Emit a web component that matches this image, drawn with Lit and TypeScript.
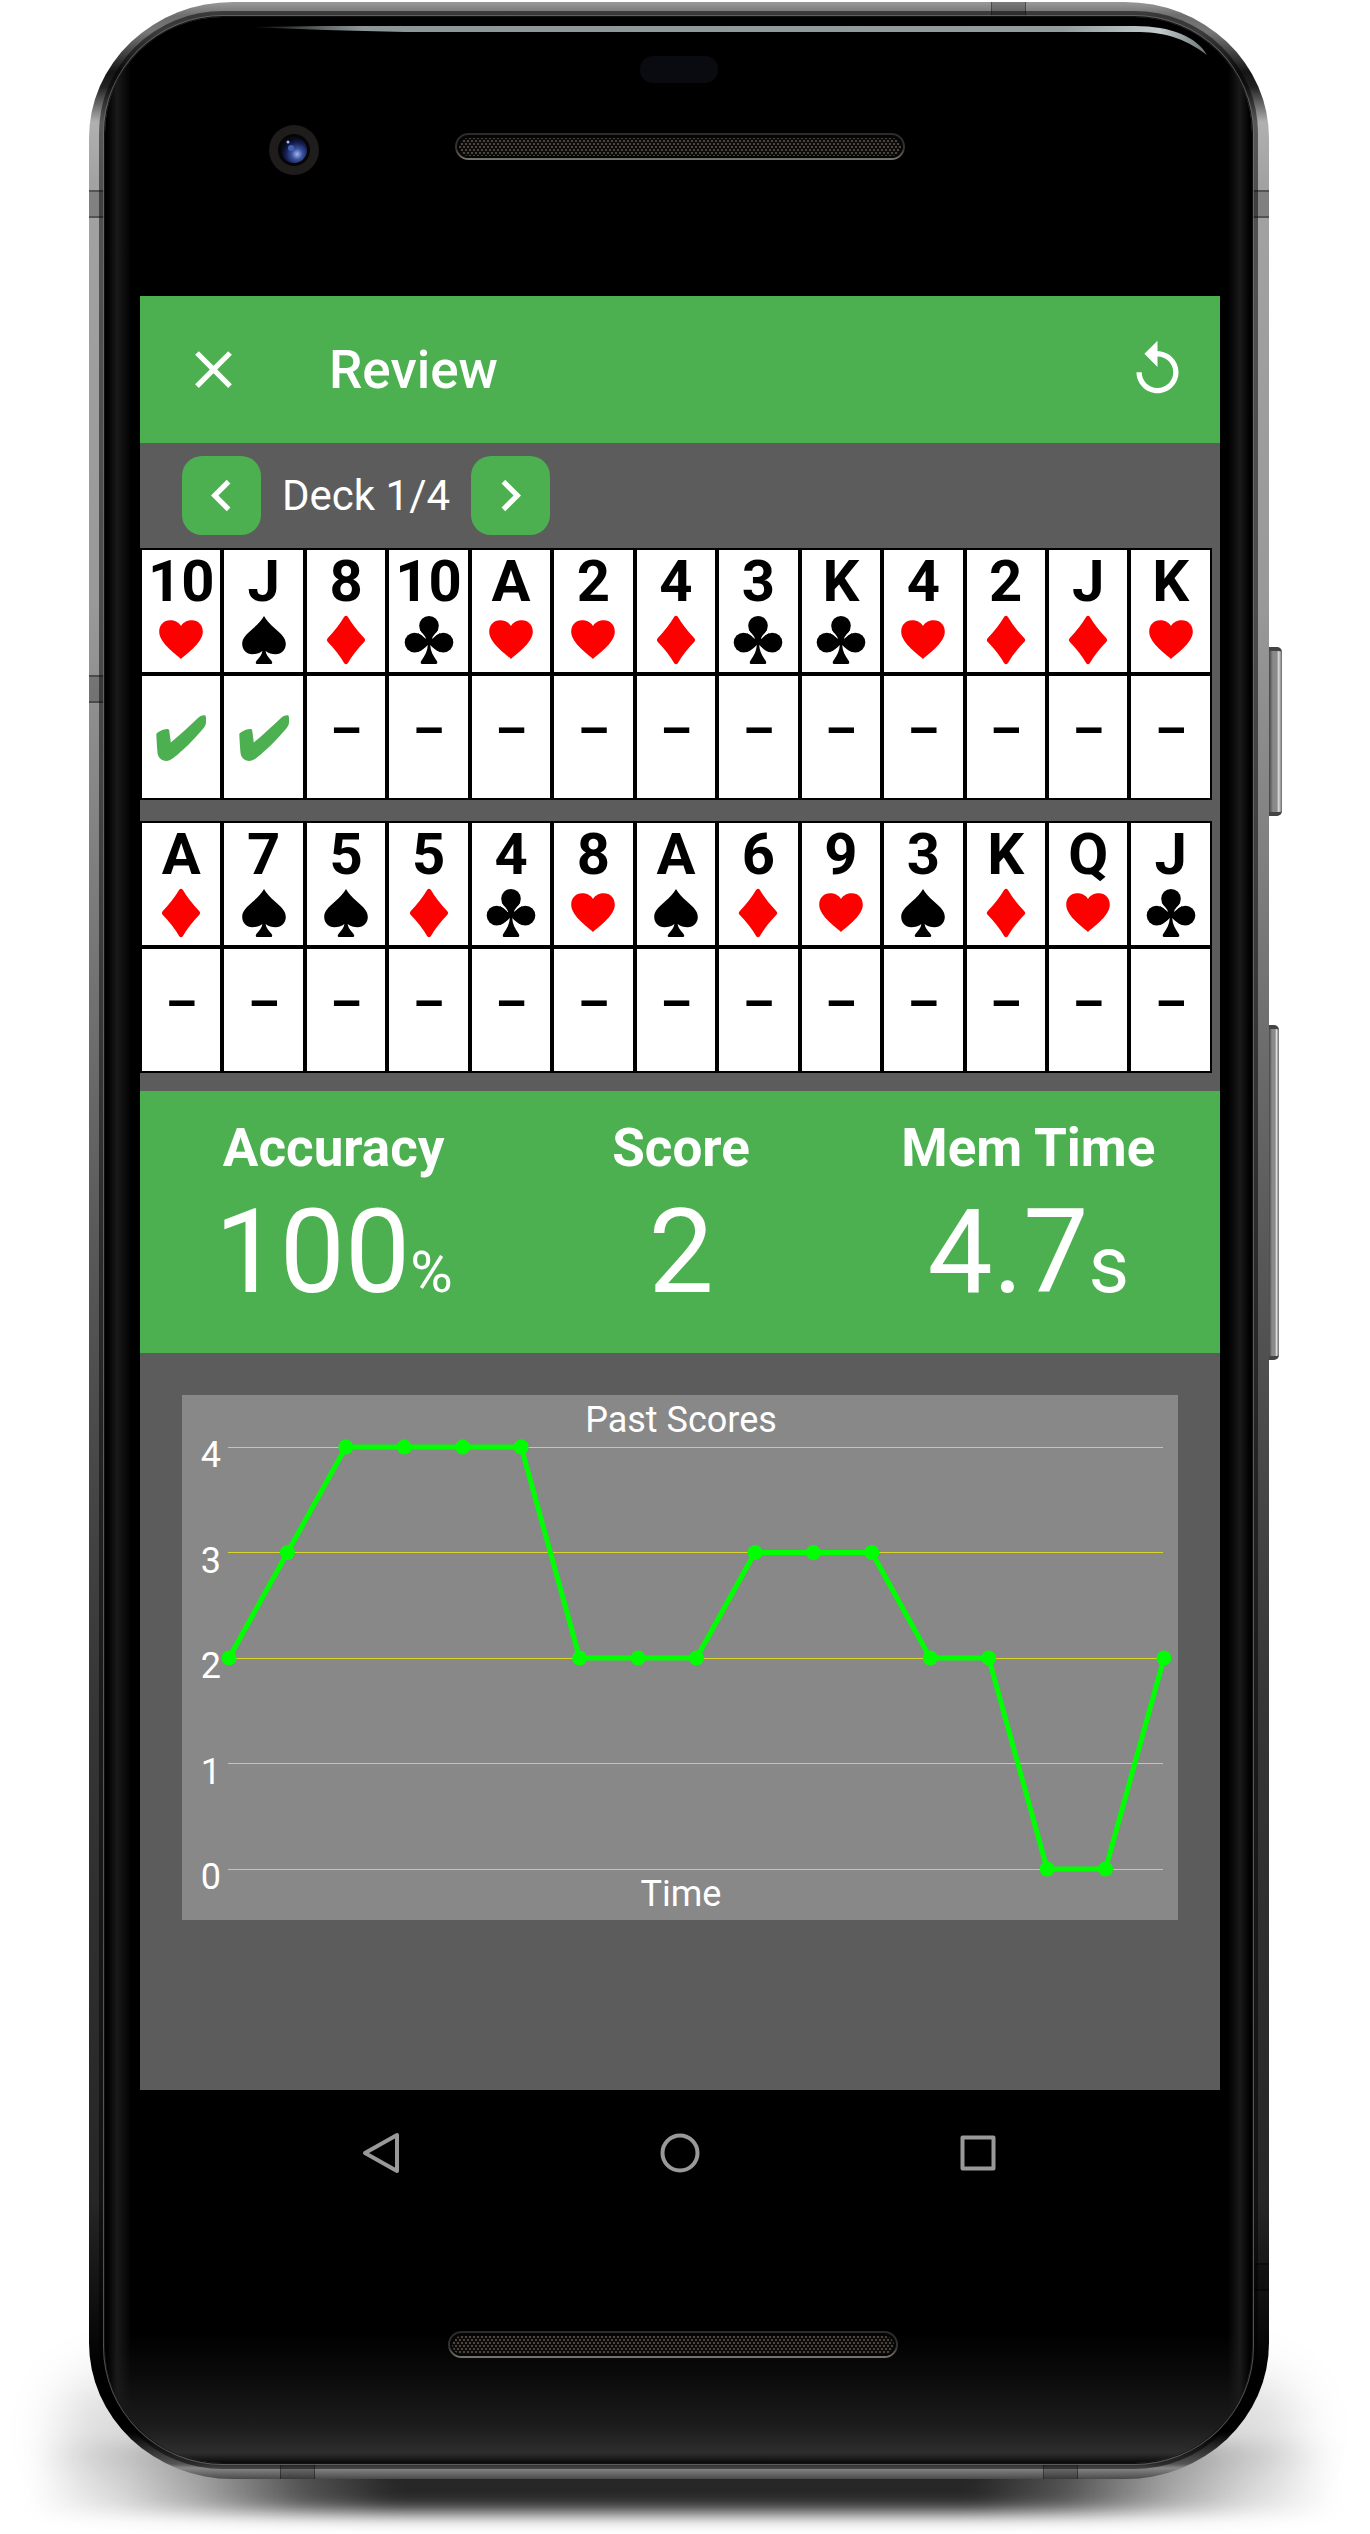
import { LitElement, html, css, svg } from "lit";
import { customElement, property, state } from "lit/decorators.js";
import { classMap } from "lit/directives/class-map.js";

type Suit = "hearts" | "spades" | "diamonds" | "clubs";
interface Card {
  rank: string;
  suit: Suit;
  correct?: boolean;
}

const SUITS: Record<string, Suit> = { H: "hearts", S: "spades", D: "diamonds", C: "clubs" };

const parseCards = (text: string): Card[] =>
  text.split(" ").map((c) => ({
    rank: c.replace(/[HSDC]\+?$/, ""),
    suit: SUITS[c.replace("+", "").slice(-1)],
    correct: c.endsWith("+"),
  }));

const CARD_ROWS: Card[][] = [
  parseCards("10H+ JS+ 8D 10C AH 2H 4D 3C KC 4H 2D JD KH"),
  parseCards("AD 7S 5S 5D 4C 8H AS 6D 9H 3S KD QH JC"),
];

const SUIT_SHAPES: Record<Suit, unknown> = {
  hearts: svg`<path d="M25 47C22 43.5 3.2 31.5 3.2 19.7C3.2 13 8 8.3 14 8.3C18.5 8.3 22.5 10 25 14C27.5 10 31.5 8.3 36 8.3C42 8.3 46.8 13 46.8 19.7C46.8 31.5 28 43.5 25 47Z"/>`,
  spades: svg`<path d="M25 4C23 8 18.5 12.5 14 16.5C7 22.5 3.2 26.5 3.2 32C3.2 37.8 7.5 42.2 13.3 42.2C17.2 42.2 20.6 41.2 23.4 39C22.8 43 20.5 45.5 18.2 48C16 50.5 16.5 52 18.5 52H31.5C33.5 52 34 50.5 31.8 48C29.5 45.5 27.2 43 26.6 39C29.4 41.2 32.8 42.2 36.7 42.2C42.5 42.2 46.8 37.8 46.8 32C46.8 26.5 43 22.5 36 16.5C31.5 12.5 27 8 25 4Z"/>`,
  diamonds: svg`<path d="M23.2 4.8Q25 2.8 26.8 4.8Q33 15.5 43.4 26.2Q45 28 43.4 29.8Q33 40.5 26.8 51.2Q25 53.2 23.2 51.2Q17 40.5 6.6 29.8Q5 28 6.6 26.2Q17 15.5 23.2 4.8Z"/>`,
  clubs: svg`<circle cx="25" cy="13.8" r="9.8"/><circle cx="10.6" cy="30.6" r="9.9"/><circle cx="39.4" cy="30.6" r="9.9"/>
    <path d="M16 17.5C17.5 21 21.5 23.5 22 27C20 25.5 18 23 14 21.3V39.9C18.5 38.7 20.5 36 23.8 33C23.5 39 21 43.5 17.5 48.5C16 51 16.8 52 18.5 52H31.5C33.2 52 34 51 32.5 48.5C29 43.5 26.5 39 26.2 33C29.5 36 31.5 38.7 36 39.9V21.3C32 23 30 25.5 28 27C28.5 23.5 32.5 21 34 17.5Z"/>`,
};

@customElement("card-table")
export class CardTable extends LitElement {
  @property({ attribute: false }) cards: Card[] = [];

  static styles = css`
    :host {
      display: block;
    }
    .cards {
      width: 100%;
      table-layout: fixed;
      border-collapse: separate;
      border-spacing: 0;
      background: #fff;
      color: #000;
      text-align: center;
      font-size: 58px;
      line-height: 62px;
      font-weight: 700;
    }
    .cell {
      box-sizing: border-box;
      height: 126px;
      padding: 0;
      border: 2px solid #000;
      vertical-align: top;
      font-weight: 700;
    }
    .rank {
      display: block;
      margin: 0 -4px;
    }
    .suit {
      display: block;
      width: 50px;
      height: 56px;
      margin: 0 auto;
      fill: #000;
    }
    .red {
      fill: #f00;
    }
    .answer {
      padding-top: 24px;
      font-size: 50px;
    }
    .check {
      display: block;
      width: 50px;
      height: 46px;
      margin: 15px auto 0;
      fill: #4caf50;
    }
  `;

  render() {
    return html`<table class="cards">
      <tr>
        ${this.cards.map(
          (c) => html`<th class="cell" scope="col">
            <span class="rank">${c.rank}</span>
            <svg
              class=${classMap({ suit: true, red: c.suit === "hearts" || c.suit === "diamonds" })}
              viewBox="0 0 50 56"
              role="img"
              aria-label=${c.suit}
            >
              ${SUIT_SHAPES[c.suit]}
            </svg>
          </th>`
        )}
      </tr>
      <tr>
        ${this.cards.map(
          (c) => html`<td class="cell answer">
            ${c.correct
              ? html`<svg class="check" viewBox="0 0 50 46" role="img" aria-label="correct">
                  <path
                    d="M.3 19C2 16.5 7 14.4 11 14C12.6 14 13.1 14.5 13.3 16L14.8 27.5C24 20 34 10.5 42.5 2.5C45 .4 48 -.2 49.3.5C50 1 50.1 3 50 7C50 10 49 11.5 46 15C38 24.5 27 35.5 18 42.5C13.5 46 10.5 46.5 7.5 45.5C4.5 44.5 2.3 42.5 1.5 38C1 32 .5 25 .3 19Z"
                  />
                </svg>`
              : "–"}
          </td>`
        )}
      </tr>
    </table>`;
  }
}

@customElement("score-chart")
export class ScoreChart extends LitElement {
  @property({ attribute: false }) scores: number[] = [];

  static styles = css`
    :host {
      display: block;
    }
    .chart {
      display: block;
      width: 100%;
      height: auto;
      background: #888;
    }
    .grid {
      stroke: #d8d62a;
      stroke-width: 1;
      shape-rendering: crispEdges;
    }
    .line {
      fill: none;
      stroke: #0f0;
      stroke-width: 5;
      stroke-linejoin: round;
    }
    .dot {
      fill: #0f0;
    }
    .label {
      fill: #fff;
      font-size: 36px;
    }
    .tick {
      text-anchor: end;
    }
    .title {
      text-anchor: middle;
    }
  `;

  private x(i: number) {
    return 47 + (i * 935) / (this.scores.length - 1);
  }

  private y(v: number) {
    return 474 - v * 105.5;
  }

  render() {
    const points = this.scores.map((s, i) => `${this.x(i)},${this.y(s)}`).join(" ");
    return html`<svg class="chart" viewBox="0 0 996 525" role="img" aria-label="Past Scores">
      ${[4, 3, 2, 1, 0].map(
        (v) => svg`<line class="grid" x1="46" x2="981" y1=${this.y(v)} y2=${this.y(v)}/>
          <text class="label tick" x="39" y=${this.y(v) + 20}>${v}</text>`
      )}
      <text class="label title" x="499" y="37">Past Scores</text>
      <text class="label title" x="499" y="511">Time</text>
      <polyline class="line" points=${points} />
      ${this.scores.map((s, i) => svg`<circle class="dot" cx=${this.x(i)} cy=${this.y(s)} r="7.5"/>`)}
    </svg>`;
  }
}

@customElement("app-root")
export class AppRoot extends LitElement {
  @state() private deck = 1;
  private readonly decks = 4;
  private readonly scores = [2, 3, 4, 4, 4, 4, 2, 2, 2, 3, 3, 3, 2, 2, 0, 0, 2];

  static styles = css`
    :host {
      display: block;
      padding: 2px 101px 55px 89px;
      background: #fff;
      overflow: hidden;
      font-family: Roboto, "Liberation Sans", sans-serif;
    }
    .phone {
      position: relative;
      isolation: isolate;
      padding: 15px 17px 16px 16px;
    }
    .rim {
      position: absolute;
      inset: 0;
      z-index: -1;
      border-radius: 144px / 136px;
      background: linear-gradient(
        to bottom,
        #999 0,
        #6d6d6d 14px,
        #777 30px,
        #151515 70px,
        #222 85px,
        #b0b0b0 120px,
        #a2a2a2 180px,
        #999 600px,
        #7b7b7b 900px,
        #585858 1250px,
        #363636 1700px,
        #262626 2200px,
        #000 2370px,
        #000 2430px,
        #555 2462px,
        #888 2466px,
        #4a4a4a 100%
      );
    }
    .shadow {
      position: absolute;
      z-index: -2;
    }
    .shadow-wide {
      inset: auto -30px 0 -30px;
      height: 100px;
      border-radius: 60px;
      background: rgba(0, 0, 0, 0.14);
      filter: blur(26px);
    }
    .shadow-core {
      inset: auto -70px -34px -60px;
      height: 70px;
      background: linear-gradient(
        to right,
        transparent 0,
        rgba(0, 0, 0, 0.12) 7%,
        rgba(0, 0, 0, 0.32) 13%,
        rgba(0, 0, 0, 0.66) 21%,
        rgba(0, 0, 0, 0.84) 28%,
        rgba(0, 0, 0, 0.84) 72%,
        rgba(0, 0, 0, 0.66) 79%,
        rgba(0, 0, 0, 0.32) 87%,
        rgba(0, 0, 0, 0.12) 93%,
        transparent 100%
      );
      filter: blur(9px);
    }
    .band {
      position: absolute;
      z-index: -1;
      background: rgba(0, 0, 0, 0.2);
      border: 0 solid rgba(0, 0, 0, 0.35);
    }
    .band-side {
      height: 24px;
      width: 16px;
      border-width: 2px 0;
    }
    .band-flat {
      width: 33px;
      height: 15px;
      border-width: 0 1px;
    }
    .left {
      left: 0;
    }
    .right {
      right: 0;
    }
    .high {
      top: 188px;
    }
    .middle {
      top: 673px;
    }
    .low {
      top: 2261px;
    }
    .top {
      top: 0;
      right: 243px;
    }
    .bottom-left {
      bottom: 0;
      left: 191px;
    }
    .bottom-right {
      bottom: 0;
      right: 191px;
    }
    .key {
      position: absolute;
      left: 100%;
      z-index: -2;
      border-radius: 0 5px 5px 0;
      background: linear-gradient(to right, #444 0, #8a8a8a 30%, #8a8a8a 60%, #ddd 75%, #666 100%);
      border: 0 solid #444;
      border-width: 4px 0;
      box-sizing: border-box;
    }
    .power {
      top: 645px;
      width: 13px;
      height: 169px;
    }
    .volume {
      top: 1023px;
      width: 10px;
      height: 335px;
    }
    .glass {
      overflow: hidden;
      border-radius: 118px / 116px;
      background: linear-gradient(to right, #000 2px, #1a1a1a 12px, transparent 26px, transparent calc(100% - 24px), #1a1a1a calc(100% - 12px), #000 calc(100% - 2px)),
        linear-gradient(to top, #0a0a0a 0, #2e2e2e 10px, #1c1c1c 36px, #0a0a0a 90px, #000 130px);
      box-shadow: 0 0 0 1px #111, 0 0 0 2px #777a, 0 0 0 6px rgba(0, 0, 0, 0.5);
    }
    .bezel {
      display: block;
      width: 100%;
      height: auto;
    }
    .screen {
      margin: 0 32px 0 35px;
    }
    .app {
      background: #5c5c5c;
      color: #fff;
      padding-bottom: 170px;
    }
    button {
      display: flex;
      align-items: center;
      justify-content: center;
      margin: 0;
      padding: 0;
      border: 0;
      background: none;
      color: inherit;
      font: inherit;
      cursor: pointer;
    }
    .icon {
      display: block;
      width: 63px;
      height: 63px;
      fill: currentColor;
    }
    .app-bar {
      display: flex;
      align-items: center;
      gap: 84px;
      height: 147px;
      padding: 0 31px 0 42px;
      background: #4caf50;
    }
    .app-title {
      flex: 1;
      margin: 0;
      font-size: 53px;
      line-height: 64px;
      font-weight: 500;
    }
    .deck-bar {
      display: flex;
      align-items: center;
      gap: 21px;
      padding: 13px 42px;
      font-size: 42px;
      line-height: 48px;
    }
    .step {
      width: 79px;
      height: 79px;
      border-radius: 20px;
      background: #4caf50;
    }
    .decks {
      display: grid;
      gap: 21px;
      padding: 0 8px 18px 0;
    }
    .stats {
      display: grid;
      grid-template-columns: repeat(3, 1fr);
      margin: 0;
      padding: 27px 18px 33px 20px;
      background: #4caf50;
      text-align: center;
    }
    .stat {
      display: grid;
      gap: 6px;
    }
    .stat-name {
      font-size: 53px;
      line-height: 60px;
      font-weight: 700;
    }
    .stat-value {
      margin: 0;
      font-size: 116px;
      line-height: 136px;
      white-space: nowrap;
    }
    .percent {
      font-size: 58px;
      line-height: 1;
    }
    .seconds {
      font-size: 79px;
      line-height: 1;
    }
    .chart-area {
      padding: 42px 42px 0;
    }
    .nav {
      display: flex;
      justify-content: space-evenly;
      height: 126px;
    }
    .nav-button {
      width: 112px;
    }
    .nav-icon {
      display: block;
      width: 44px;
      height: 44px;
      fill: none;
      stroke: #999;
      stroke-width: 4;
      stroke-linejoin: round;
    }
  `;

  private step(by: number) {
    this.deck = Math.min(this.decks, Math.max(1, this.deck + by));
  }

  private speaker(x: number, y: number) {
    return svg`<defs>
        <pattern id="mesh" width="4" height="6" patternUnits="userSpaceOnUse">
          <rect width="4" height="6" fill="#0c0b0a"/>
          <rect width="2" height="2" fill="#4c463d"/>
          <rect x="2" y="3" width="2" height="2" fill="#4c463d"/>
        </pattern>
        <linearGradient id="lip" x2="0" y2="1">
          <stop offset="0" stop-color="#2b2b2b"/>
          <stop offset=".6" stop-color="#333"/>
          <stop offset="1" stop-color="#77736c"/>
        </linearGradient>
      </defs>
      <rect x=${x + 1} y=${y + 1} width="448" height="25" rx="12.5" fill="#050505" stroke="url(#lip)" stroke-width="2"/>
      <rect x=${x + 4} y=${y + 5} width="442" height="18" rx="9" fill="url(#mesh)"/>`;
  }

  render() {
    return html`
      <div class="phone">
        <div class="shadow shadow-wide"></div>
        <div class="shadow shadow-core"></div>
        <div class="key power"></div>
        <div class="key volume"></div>
        <div class="rim"></div>
        <div class="band band-side left high"></div>
        <div class="band band-side right high"></div>
        <div class="band band-side left middle"></div>
        <div class="band band-side right low"></div>
        <div class="band band-flat top"></div>
        <div class="band band-flat bottom-left"></div>
        <div class="band band-flat bottom-right"></div>

        <div class="glass">
          <svg class="bezel" viewBox="0 0 1147 279" aria-hidden="true">
            <defs>
              <linearGradient id="glare">
                <stop offset="0" stop-color="#9aa3a4" stop-opacity="0" />
                <stop offset=".12" stop-color="#8d9697" />
                <stop offset=".85" stop-color="#939c9d" />
                <stop offset=".95" stop-color="#c3cccd" />
                <stop offset="1" stop-color="#6d7576" />
              </linearGradient>
              <radialGradient id="lens" cx=".62" cy=".66" r=".6">
                <stop offset="0" stop-color="#a4b4e6" />
                <stop offset=".35" stop-color="#3a51a0" />
                <stop offset=".75" stop-color="#121d4c" />
                <stop offset="1" stop-color="#070a1c" />
              </radialGradient>
            </defs>
            <path
              d="M142 10L220 9H1030C1066 9 1092 20 1102 38C1078 20 1058 15 1030 15H300L220 13Z"
              fill="url(#glare)"
            />
            <rect x="535" y="39" width="78" height="27" rx="13" fill="#090b10" />
            <circle cx="189" cy="133" r="25" fill="#1f1c1c" />
            <circle cx="189" cy="133" r="16" fill="#050507" />
            <circle cx="189" cy="133" r="13" fill="url(#lens)" />
            <circle cx="186" cy="131" r="3" fill="#4560b4" />
            <circle cx="183" cy="125" r="1.5" fill="#a9b9ee" />
            ${this.speaker(350, 116)}
          </svg>

          <div class="screen">
            <main class="app">
              <header class="app-bar">
                <button type="button" aria-label="Close">
                  <svg class="icon" viewBox="0 0 24 24">
                    <path
                      d="M19 6.41L17.59 5 12 10.59 6.41 5 5 6.41 10.59 12 5 17.59 6.41 19 12 13.41 17.59 19 19 17.59 13.41 12z"
                    />
                  </svg>
                </button>
                <h1 class="app-title">Review</h1>
                <button type="button" aria-label="Replay">
                  <svg class="icon" viewBox="0 0 24 24">
                    <path
                      d="M12 5V1L7 6l5 5V7c3.31 0 6 2.69 6 6s-2.69 6-6 6-6-2.69-6-6H4c0 4.42 3.58 8 8 8s8-3.58 8-8-3.58-8-8-8z"
                    />
                  </svg>
                </button>
              </header>

              <div class="deck-bar">
                <button class="step" type="button" aria-label="Previous deck" @click=${() => this.step(-1)}>
                  <svg class="icon" viewBox="0 0 24 24">
                    <path d="M15.41 7.41L14 6l-6 6 6 6 1.41-1.41L10.83 12z" />
                  </svg>
                </button>
                <span>Deck ${this.deck}/${this.decks}</span>
                <button class="step" type="button" aria-label="Next deck" @click=${() => this.step(1)}>
                  <svg class="icon" viewBox="0 0 24 24">
                    <path d="M10 6L8.59 7.41 13.17 12l-4.58 4.59L10 18l6-6z" />
                  </svg>
                </button>
              </div>

              <div class="decks">
                ${CARD_ROWS.map((cards) => html`<card-table .cards=${cards}></card-table>`)}
              </div>

              <dl class="stats">
                <div class="stat">
                  <dt class="stat-name">Accuracy</dt>
                  <dd class="stat-value">100<span class="percent">%</span></dd>
                </div>
                <div class="stat">
                  <dt class="stat-name">Score</dt>
                  <dd class="stat-value">2</dd>
                </div>
                <div class="stat">
                  <dt class="stat-name">Mem Time</dt>
                  <dd class="stat-value">4.7<span class="seconds">s</span></dd>
                </div>
              </dl>

              <div class="chart-area">
                <score-chart .scores=${this.scores}></score-chart>
              </div>
            </main>

            <nav class="nav">
              <button class="nav-button" type="button" aria-label="Back">
                <svg class="nav-icon" viewBox="0 0 44 44"><path d="M37 4V40L5 22Z" /></svg>
              </button>
              <button class="nav-button" type="button" aria-label="Home">
                <svg class="nav-icon" viewBox="0 0 44 44"><circle cx="22" cy="22" r="17.5" /></svg>
              </button>
              <button class="nav-button" type="button" aria-label="Overview">
                <svg class="nav-icon" viewBox="0 0 44 44"><rect x="6.5" y="6.5" width="31" height="31" /></svg>
              </button>
            </nav>
          </div>

          <svg class="bezel" viewBox="0 0 1147 247" aria-hidden="true">${this.speaker(343, 115)}</svg>
        </div>
      </div>
    `;
  }
}
